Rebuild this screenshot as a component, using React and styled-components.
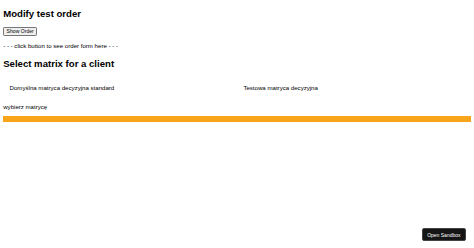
import React from "react";
import styled, { createGlobalStyle } from "styled-components";

const Global = createGlobalStyle`
  html, body { background: #fff; }
  body {
    margin: 0 3.2px;
    font-family: "Liberation Sans", Arial, Helvetica, sans-serif;
    font-size: 6.1px;
    color: #000;
  }
`;

const Title = styled.h2`
  font-size: 9.6px;
  font-weight: 700;
  margin: 8px 0;
  line-height: 11px;
`;

const ToggleButton = styled.button`
  font-family: "Liberation Sans", Arial, sans-serif;
  font-size: 5.1px;
  line-height: 6px;
  padding: 0.4px 2.4px;
  border: 0.8px solid #767676;
  border-radius: 1.2px;
  background: #efefef;
  color: #000;
`;

const Hint = styled.p`
  margin: 6.4px 0;
  line-height: 7.4px;
`;

const OptionsRow = styled.div`
  display: flex;
`;

const Option = styled.div`
  flex: 1 1 50%;
  padding: 7px 6.4px;
  line-height: 7.4px;
`;

const Prompt = styled.p`
  margin: 5px 0 6px;
  line-height: 7.4px;
`;

const Bar = styled.div`
  height: 6px;
  background: #f9a51b;
`;

const SandboxButton = styled.button`
  position: fixed;
  right: 8px;
  bottom: 7px;
  height: 13px;
  padding: 0 4.5px;
  font-family: "Liberation Sans", Arial, sans-serif;
  font-size: 5px;
  color: #fff;
  background: #151515;
  border: 0.6px solid #444;
  border-radius: 2px;
`;

export default function App() {
  return (
    <>
      <Global />
      <Title>Modify test order</Title>
      <div>
        <ToggleButton>Show Order</ToggleButton>
      </div>
      <Hint>- - - click button to see order form here - - -</Hint>
      <Title>Select matrix for a client</Title>
      <OptionsRow>
        <Option>Domyślna matryca decyzyjna standard</Option>
        <Option>Testowa matryca decyzyjna</Option>
      </OptionsRow>
      <Prompt>wybierz matrycę</Prompt>
      <Bar />
      <SandboxButton>Open Sandbox</SandboxButton>
    </>
  );
}
